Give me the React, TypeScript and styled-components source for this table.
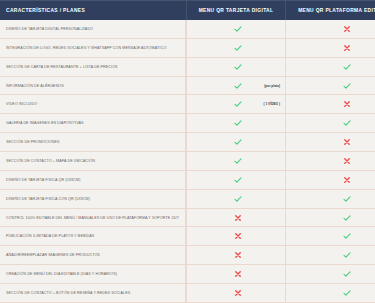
import styled, { createGlobalStyle } from 'styled-components'

const GlobalStyle = createGlobalStyle`
  html, body {
    margin: 0;
    padding: 0;
    background: #f4f2ee;
  }
`

const Viewport = styled.div`
  width: 375px;
  height: 303px;
  overflow: hidden;
  background: #f4f2ee;
  font-family: 'Liberation Sans', Arial, sans-serif;
`

const Table = styled.div`
  width: 404px;
`

const columns = '187px 99px 118px'

const HeaderRow = styled.div`
  display: grid;
  grid-template-columns: ${columns};
  height: 20px;
  background: #2f3f5d;
  border-top: 1px solid #46546e;
  box-sizing: border-box;
`

const HeaderCell = styled.div<{ $first?: boolean }>`
  display: flex;
  align-items: center;
  justify-content: ${({ $first }) => ($first ? 'flex-start' : 'center')};
  padding-left: ${({ $first }) => ($first ? '6px' : '0')};
  color: #ffffff;
  font-size: 4.9px;
  font-weight: 700;
  letter-spacing: 0.35px;
  text-transform: uppercase;
  white-space: nowrap;
  border-right: 1px solid #44526d;
`

const Row = styled.div`
  display: grid;
  grid-template-columns: ${columns};
  height: 18.87px;
  box-sizing: border-box;
  border-bottom: 1px solid #ead8cf;
`

const Feature = styled.div`
  display: flex;
  align-items: center;
  padding-left: 6px;
  color: #6a6664;
  font-size: 3.65px;
  letter-spacing: 0.1px;
  text-transform: uppercase;
  white-space: nowrap;
  border-right: 2px solid #ead9d0;
`

const PlanCell = styled.div`
  display: grid;
  grid-template-columns: 1fr auto 1fr;
  align-items: center;
  padding-left: 4px;
  border-right: 1px solid #ead9d0;
`

const Note = styled.span`
  justify-self: end;
  padding-right: 5px;
  color: #3a3a3a;
  font-family: 'Liberation Sans', Arial, sans-serif;
  font-size: 3.2px;
  font-weight: 700;
  white-space: nowrap;
`

const IconSlot = styled.span`
  grid-column: 2;
  display: flex;
  align-items: center;
`

const Check = () => (
  <svg width="8" height="6" viewBox="0 0 10 8">
    <path d="M1 4.4 L3.6 6.8 L9 1.2" fill="none" stroke="#3fd07e" strokeWidth="1.4" strokeLinecap="round" strokeLinejoin="round" />
  </svg>
)

const Cross = () => (
  <svg width="6" height="6" viewBox="0 0 8 8">
    <path d="M1 1 L7 7 M7 1 L1 7" fill="none" stroke="#f2504f" strokeWidth="1.9" strokeLinecap="round" />
  </svg>
)

type Feature = { label: string; digital: boolean; platform: boolean; note?: string }

const features: Feature[] = [
  { label: 'Diseño de tarjeta digital personalizado', digital: true, platform: false },
  { label: 'Integración de logo, redes sociales y WhatsApp con mensaje automático', digital: true, platform: false },
  { label: 'Sección de carta de restaurante + lista de precios', digital: true, platform: true },
  { label: 'Información de alérgenos', digital: true, platform: true, note: '(por plato)' },
  { label: 'Video incluido', digital: true, platform: false, note: '( 1 VÍDEO )' },
  { label: 'Galería de imágenes en diapositivas', digital: true, platform: true },
  { label: 'Sección de promociones', digital: true, platform: false },
  { label: 'Sección de contacto + mapa de ubicación', digital: true, platform: false },
  { label: 'Diseño de tarjeta física QR (5x8cm)', digital: true, platform: false },
  { label: 'Diseño de tarjeta física con QR (5x8cm)', digital: true, platform: true },
  { label: 'Control 100% editable del menú / manuales de uso de plataforma y soporte 24/7', digital: false, platform: true },
  { label: 'Publicación ilimitada de platos y bebidas', digital: false, platform: true },
  { label: 'Añadir/reemplazar imágenes de productos', digital: false, platform: true },
  { label: 'Creación de menú del día editable (días y horarios)', digital: false, platform: true },
  { label: 'Sección de contacto + botón de reseña y redes sociales', digital: false, platform: true },
]

function Mark({ ok }: { ok: boolean }) {
  return <IconSlot>{ok ? <Check /> : <Cross />}</IconSlot>
}

export default function App() {
  return (
    <Viewport>
      <GlobalStyle />
      <Table>
        <HeaderRow>
          <HeaderCell $first>Características / Planes</HeaderCell>
          <HeaderCell>Menu QR Tarjeta Digital</HeaderCell>
          <HeaderCell>Menu QR Plataforma Editable</HeaderCell>
        </HeaderRow>
        {features.map((f) => (
          <Row key={f.label}>
            <Feature>{f.label}</Feature>
            <PlanCell>
              <Mark ok={f.digital} />
              {f.note && <Note>{f.note}</Note>}
            </PlanCell>
            <PlanCell>
              <Mark ok={f.platform} />
            </PlanCell>
          </Row>
        ))}
      </Table>
    </Viewport>
  )
}
